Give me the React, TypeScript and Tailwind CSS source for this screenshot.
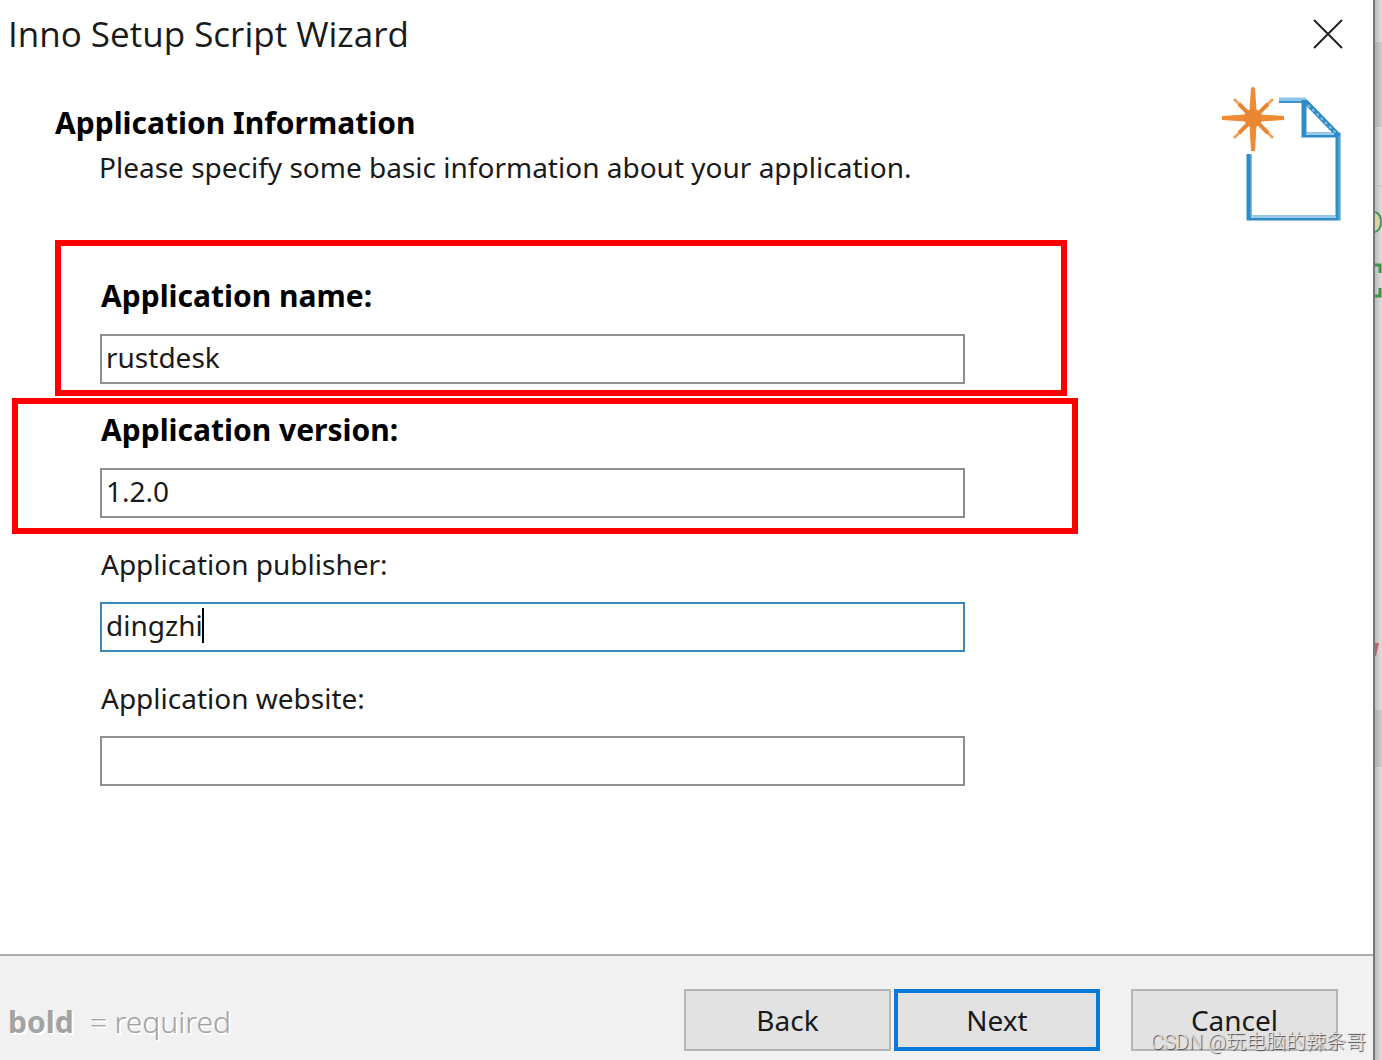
import React, { useState } from 'react';
import clsx from 'clsx';

const FIELDS = [
  { id: 'name', label: 'Application name:', value: 'rustdesk', required: true, mark: '-top-[36px] -right-[102px] -bottom-[12px] -left-[45px]' },
  { id: 'version', label: 'Application version:', value: '1.2.0', required: true, mark: '-top-[12px] -right-[113px] -bottom-[16px] -left-[88px]' },
  { id: 'publisher', label: 'Application publisher:', value: 'dingzhi', active: true },
  { id: 'website', label: 'Application website:', value: '' },
];

const CloseIcon = () => (
  <svg width="32" height="32" viewBox="0 0 32 32" fill="none" stroke="#222" strokeWidth="2">
    <path d="M2 2L30 30M30 2L2 30" />
  </svg>
);

const NewDocumentIcon = () => (
  <svg width="120" height="136" viewBox="0 0 120 136" fill="none" className="shrink-0">
    <path d="M57 13H84" stroke="#8cc6e8" strokeWidth="5" />
    <path d="M57 15H84" stroke="#3d93c8" strokeWidth="2" />
    <g stroke="#2f8cc6" strokeWidth="5">
      <path d="M27 67V131H116V48H82V13" />
      <path d="M83 14L115 47" />
    </g>
    <path d="M29 130H114M84 47H112" stroke="#9bcdea" strokeWidth="2" />
    <path d="M29 67V129M117 49V133" stroke="#6cb6e2" strokeWidth="1" />
    <path d="M86 18L114 46" stroke="#7fbfe4" strokeWidth="2" strokeDasharray="3 3" />
    <g fill="#ee8b33">
      <path d="M29 1Q31 -1 33 1L35 31L33 64H29L27 31Z" />
      <path d="M0 29L31 27L62 29V33L31 35L0 33Z" />
      <circle cx="31" cy="31" r="9" />
    </g>
    <path d="M12 12L51 51M51 12L12 51" stroke="#f0a565" strokeWidth="3" />
    <path d="M17 17L46 46M46 17L17 46" stroke="#e98632" strokeWidth="4" />
    <circle cx="31" cy="31" r="9" fill="#e98632" />
  </svg>
);

// Sliver of the editor window that sits behind the wizard
const EditorEdge = () => (
  <div className="w-[7px] shrink-0 overflow-hidden bg-linear-to-r from-[#bdbdbd] to-[#dedede]">
    <svg width="7" height="1060" viewBox="0 0 7 1060" fill="none">
      <path d="M0 42H7V127H0ZM0 710H7V767H0Z" fill="#000" fillOpacity="0.08" />
      <path d="M0 186H7" stroke="#bbb" />
      <path d="M0 212Q6 214 6 222Q6 230 0 232" fill="#d8d3a0" stroke="#3c9472" strokeWidth="2" />
      <path d="M0 265H5V273M0 296H5V288" stroke="#3c9448" strokeWidth="3" />
      <path d="M0 643H4L1 656H0Z" fill="#bd6470" />
    </svg>
  </div>
);

const App = () => {
  const [values, setValues] = useState<Record<string, string>>(
    Object.fromEntries(FIELDS.map((f) => [f.id, f.value]))
  );

  return (
    <div className="relative flex min-h-screen overflow-hidden bg-white font-['Noto_Sans',sans-serif] text-[28px] leading-10 text-[#1a1a1a]">
      <div className="flex min-w-0 flex-1 flex-col border-r-2 border-[#777]">
        <header className="flex h-[67px] items-center justify-between pr-[29px] pl-2">
          <h1 className="font-['Open_Sans',sans-serif] text-[35px]">Inno Setup Script Wizard</h1>
          <button type="button" aria-label="Close">
            <CloseIcon />
          </button>
        </header>

        <main className="flex-1 pb-10">
          <div className="flex items-start justify-between pt-5 pr-[31px] pl-[55px]">
            <div className="pt-4">
              <h2 className="text-[30px] font-bold text-black">Application Information</h2>
              <p className="mt-1 pl-11">Please specify some basic information about your application.</p>
            </div>
            <NewDocumentIcon />
          </div>

          <form className="mt-[53px] flex max-w-[965px] flex-col gap-[26px] pl-[100px]">
            {FIELDS.map((field) => (
              <div key={field.id} className="relative flex flex-col gap-[18px]">
                <label htmlFor={field.id} className={clsx('pl-px', field.required && 'text-[30px] font-bold text-black')}>
                  {field.label}
                </label>
                <div className="relative">
                  <input
                    id={field.id}
                    type="text"
                    value={values[field.id]}
                    onChange={(e) => setValues({ ...values, [field.id]: e.target.value })}
                    className={clsx(
                      'block h-[50px] w-full border-2 bg-white px-1 pb-1 outline-none',
                      field.active ? 'border-[#3c88b8]' : 'border-[#8e8e90]'
                    )}
                  />
                  {field.active && <span className="absolute top-[6px] left-[102px] h-[35px] w-0.5 bg-black" />}
                </div>
                {field.mark && <span className={clsx('pointer-events-none absolute border-[6px] border-[#ff0000]', field.mark)} />}
              </div>
            ))}
          </form>
        </main>

        <footer className="flex h-[106px] items-center justify-between border-t-2 border-[#ababab] bg-[#f1f1f1] pt-8 pr-[35px] pb-2 pl-2">
          <p className="pt-1 text-[30px] text-[#a3a3a3] [text-shadow:2px_2px_0_#fff]">
            <b className="mr-4">bold</b>
            <span className="font-light">= required</span>
          </p>
          <div className="flex">
            <button type="button" className="h-[62px] w-[207px] border-2 border-[#b5b5b5] bg-[#e2e2e2]">
              Back
            </button>
            <button type="button" className="ml-[3px] h-[62px] w-[206px] border-4 border-[#0a7ad6] bg-[#e2e2e2]">
              Next
            </button>
            <button type="button" className="ml-[31px] h-[62px] w-[207px] border-2 border-[#b5b5b5] bg-[#e2e2e2]">
              Cancel
            </button>
          </div>
        </footer>
      </div>

      <EditorEdge />

      <div className="pointer-events-none absolute right-4 bottom-1 font-['Roboto','Noto_Sans_CJK_SC',sans-serif] text-[20px] leading-7 font-light text-[#e2e2e2] [text-shadow:1px_1px_1px_#444]">
        CSDN @玩电脑的辣条哥
      </div>
    </div>
  );
};

export default App;
